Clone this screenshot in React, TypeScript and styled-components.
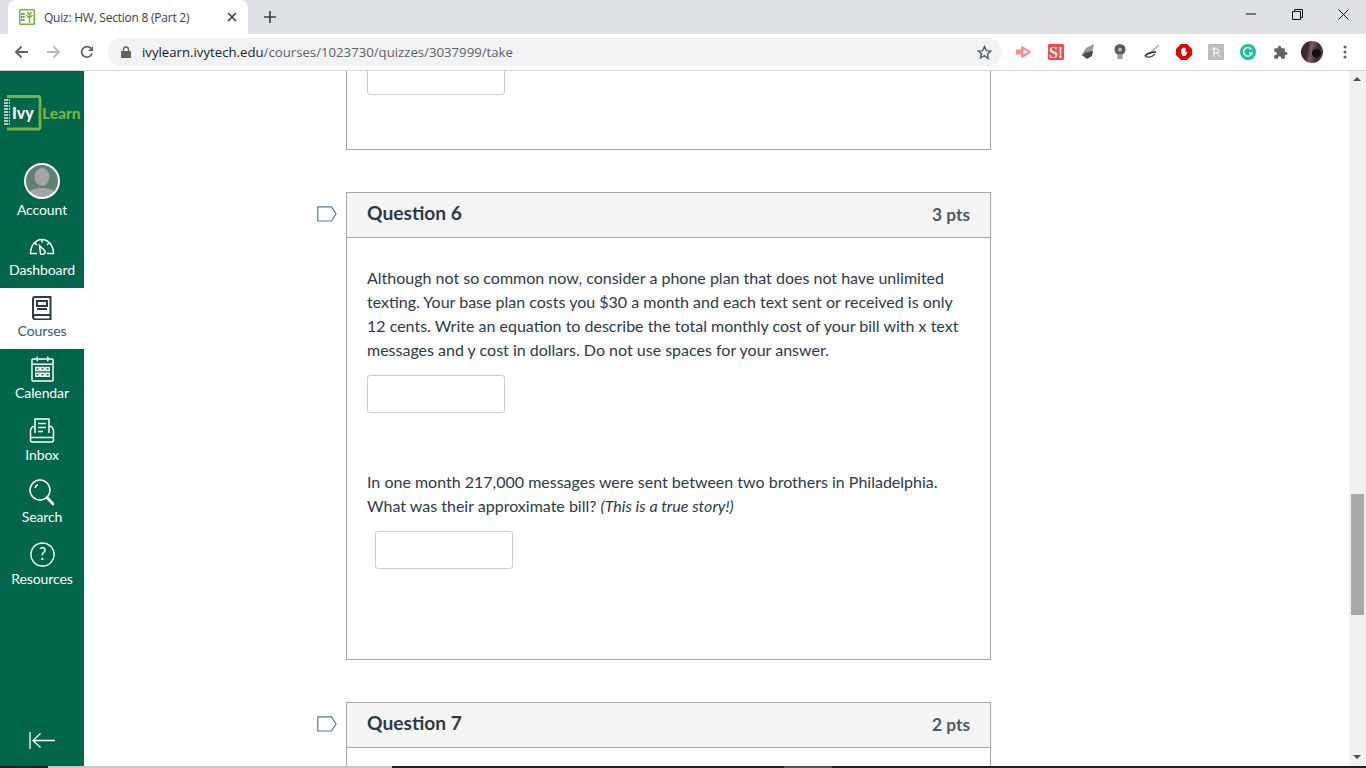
import React from "react";
import styled, { createGlobalStyle } from "styled-components";

const Global = createGlobalStyle`
  html, body { margin: 0; padding: 0; height: 768px; overflow: hidden; background: #fff; }
  #root { width: 1366px; height: 768px; }
  * { box-sizing: border-box; }
`;

const Page = styled.div`
  width: 1366px; height: 768px; display: flex; flex-direction: column; overflow: hidden;
  font-family: Lato, "Noto Sans", sans-serif; position: relative;
`;
const TabStrip = styled.div`
  height: 34px; background: #dee1e6; display: flex; align-items: flex-end; flex: none; padding-left: 8px;
`;
const Tab = styled.div`
  width: 240px; height: 34px; background: #fff; border-radius: 8px 8px 0 0; display: flex; align-items: center;
  padding: 0 0 0 11px; font: 12px "Open Sans", "Liberation Sans", sans-serif; color: #3c4043; position: relative;
`;
const TabTitle = styled.span` margin-left: 9px; flex: 1; white-space: nowrap; letter-spacing: -0.24px; `;
const TabClose = styled.span` width: 28px; display: flex; justify-content: center; margin-right: 2px; `;
const NewTab = styled.div` width: 44px; height: 34px; display: flex; align-items: center; justify-content: center; `;
const WinControls = styled.div` margin-left: auto; display: flex; height: 34px; align-items: center; `;
const WinBtn = styled.div` width: 46px; height: 30px; display: flex; align-items: center; justify-content: center; margin-top: -6px;`;

const ToolBar = styled.div`
  height: 37px; background: #fff; display: flex; align-items: center; flex: none; border-bottom: 1px solid #d3d5d8;
`;
const NavIcons = styled.div` display: flex; width: 108px; padding-left: 9px; gap: 9px; align-items: center; `;
const NavBtn = styled.div` width: 24px; height: 24px; display: flex; align-items: center; justify-content: center; `;
const Omnibox = styled.div`
  width: 894px; height: 28px; border-radius: 14px; background: #f1f3f4; display: flex; align-items: center;
  padding: 0 10px 0 13px; font: 13.2px "Open Sans", "Liberation Sans", sans-serif; color: #5f6368;
`;
const Host = styled.span` color: #202124; `;
const UrlText = styled.span` margin-left: 11px; flex: 1; white-space: nowrap; `;
const Extensions = styled.div` display: flex; align-items: center; margin-left: 6px; gap: 0; `;
const Ext = styled.div` width: 32px; height: 24px; display: flex; align-items: center; justify-content: center; `;
const Avatar = styled.div`
  width: 22px; height: 22px; border-radius: 50%; margin: 0 20px 0 5px; flex: none;
  background: radial-gradient(circle at 70% 55%, #111 0 22%, transparent 24%), linear-gradient(100deg, #3a2a2c 0 30%, #7a6266 45%, #3d2c30 70%, #554045);
`;

const Body = styled.div` flex: 1; display: flex; min-height: 0; `;
const Side = styled.nav`
  width: 84px; background: #00664a; flex: none; display: flex; flex-direction: column; align-items: stretch; position: relative;
`;
const LogoBox = styled.div` height: 81px; padding-top: 23px; padding-left: 2px; display: flex; `;
const NavItem = styled.div<{ $active?: boolean; $h: number }>`
  height: ${p => p.$h}px; flex: none; display: flex; flex-direction: column; align-items: center; justify-content: flex-end;
  background: ${p => (p.$active ? "#fff" : "transparent")};
  color: ${p => (p.$active ? "#2d5b7b" : "#fff")};
  font-size: 14px; line-height: 18px; padding-bottom: 9px; letter-spacing: -0.1px;
`;
const IconSlot = styled.div<{ $gap: number }>`
  display: flex; align-items: flex-end; justify-content: center; margin-bottom: ${p => p.$gap}px; line-height: 0;
`;
const Collapse = styled.div` position: absolute; left: 29px; bottom: 18px; line-height: 0; `;

const Main = styled.main` flex: 1; position: relative; min-width: 0; overflow: hidden; padding-left: 262px; `;
const Scrollbar = styled.div`
  width: 17px; background: #f1f1f1; flex: none; display: flex; flex-direction: column; align-items: center; position: relative;
`;
const Arrow = styled.div<{ $dir: "up" | "down" }>`
  position: absolute; left: 4px; ${p => (p.$dir === "up" ? "top: 6px;" : "bottom: 9px;")}
  width: 0; height: 0; border-left: 4px solid transparent; border-right: 4px solid transparent;
  ${p => (p.$dir === "up" ? "border-bottom: 4px solid #505050;" : "border-top: 4px solid #505050;")}
`;
const Thumb = styled.div` position: absolute; left: 2px; top: 423px; width: 13px; height: 121px; background: #a8a8a8; `;

const Card = styled.section<{ $h: number; $mt: number; $top?: boolean }>`
  display: flow-root;
  width: 645px; height: ${p => p.$h}px; margin-top: ${p => p.$mt}px; border: 1px solid #a6a6a6;
  ${p => p.$top && "border-top: none;"} position: relative; flex: none; padding: 0 20px; background: #fff;
`;
const Head = styled.header`
  height: 45px; margin: 0 -20px; padding: 0 20px; background: #f5f5f5; border-bottom: 1px solid #a6a6a6;
  display: flex; justify-content: space-between; align-items: center; color: #2d3b45;
`;
const QTitle = styled.h2` margin: -4px 0 0; font-size: 19.2px; font-weight: 700; color: #2d3b45; line-height: 24px; `;
const Pts = styled.span` font-size: 17.3px; font-weight: 700; color: #4c5a64; line-height: 20px; `;
const Flag = styled.div` position: absolute; left: -30px; top: 13px; line-height: 0; `;
const Para = styled.p<{ $mt: number }>`
  margin: ${p => p.$mt}px 0 0; font-size: 16px; line-height: 24px; color: #2d3b45; width: 600px;
`;
const Ans = styled.input<{ $ml?: number; $mt: number }>`
  display: block; width: 138px; height: 38px; border: 1px solid #c7cdd1; border-radius: 3px; background: #fff;
  margin-left: ${p => p.$ml ?? 0}px; margin-top: ${p => p.$mt}px; padding: 0;
`;
const Taskbar = styled.div`
  position: absolute; left: 0; right: 0; bottom: 0; height: 2px; background: #202020; display: flex;
`;
const TaskGap = styled.div` margin-left: 48px; width: 344px; background: #c8c8c8; `;
const TaskActive = styled.div` margin-left: 392px; width: 48px; background: #555; `;

const Logo = () => (
  <svg width="80" height="38" viewBox="0 0 80 38">
    <path d="M5 2.500H36a2 2 0 0 1 2 2V33a2 2 0 0 1-2 2H5" fill="none" stroke="#7ab338" strokeWidth="2.800" />
    <g stroke="#e8efe6" strokeWidth="1.400" strokeDasharray="4 0.800">
      {[6, 9, 12, 15, 18, 21, 24, 27, 30].map(y => <path key={y} d={`M2 ${y}h6`} />)}
    </g>
    <text x="10" y="25" fontFamily="Lato, sans-serif" fontWeight="900" fontSize="16" fill="#fff">Ivy</text>
    <text x="40" y="25" fontFamily="Lato, sans-serif" fontWeight="900" fontSize="15.500" fill="#7ab338">Learn</text>
  </svg>
);
const AccountIcon = () => (
  <svg width="36" height="36" viewBox="0 0 36 36">
    <defs><clipPath id="c"><circle cx="18" cy="18" r="16.500" /></clipPath></defs>
    <circle cx="18" cy="18" r="16.500" fill="#5f8173" />
    <g clipPath="url(#c)" fill="#a5a5a5">
      <ellipse cx="18" cy="14" rx="7.500" ry="9" />
      <path d="M3 36c0-9 7-11 15-11s15 2 15 11z" />
    </g>
    <circle cx="18" cy="18" r="17" fill="none" stroke="#fff" strokeWidth="2" />
  </svg>
);
const stroke = { fill: "none", stroke: "#fff", strokeWidth: 1.5 } as const;
const DashIcon = () => (
  <svg width="26" height="17" viewBox="0 0 26 17" {...stroke}>
    <path d="M8 15.500H1.500A11.500 14 0 0 1 24.500 15.500H18" />
    <path d="M13 1.500v3M6 5l2 2M20 5l-2 2" />
    <path d="M10.500 7.500L15.500 12.500a2.500 2.500 0 0 1-4 3z" />
  </svg>
);
const BookIcon = () => (
  <svg width="20" height="24" viewBox="0 0 20 24" fill="none" stroke="#2d3b45" strokeWidth="2">
    <path d="M3 1h15.500v18H3.500A2.500 2.500 0 0 0 1 21.500V3a2 2 0 0 1 2-2z" />
    <path d="M1 21a2.500 2.500 0 0 0 2.500 2.500h15V19" />
    <rect x="5" y="5" width="10" height="5" />
    <path d="M5 13h10" />
  </svg>
);
const CalIcon = () => (
  <svg width="23" height="26" viewBox="0 0 24 27" {...stroke}>
    <rect x="1" y="3" width="22" height="23" rx="1" />
    <path d="M1 8.500h22M6.500 .5v5M17.500 .5v5" />
    <path d="M5 12h3.500v3H5zM10.200 12h3.500v3h-3.500zM15.500 12H19v3h-3.500zM5 18h3.500v3H5zM10.200 18h3.500v3h-3.500zM15.500 18H19v3h-3.500z" />
  </svg>
);
const InboxIcon = () => (
  <svg width="26" height="25" viewBox="0 0 26 25" {...stroke}>
    <path d="M6 15V1h14v14" />
    <path d="M9 5.500h8M9 9.500h8M9 13.500h5" />
    <path d="M6 8.500H3.500L1.500 12v10a2 2 0 0 0 2 2h19a2 2 0 0 0 2-2V12l-2-3.500H20" />
    <path d="M1.500 19.500H24.500" />
  </svg>
);
const SearchIcon = () => (
  <svg width="26" height="27" viewBox="0 0 26 27" {...stroke}>
    <circle cx="11" cy="11" r="10" />
    <path d="M6 9a6 6 0 0 1 3-3.500" />
    <path d="M18 18.500l6 6.500" strokeWidth="2.600" strokeLinecap="round" />
  </svg>
);
const HelpIcon = () => (
  <svg width="25" height="25" viewBox="0 0 26 26" {...stroke}>
    <circle cx="13" cy="13" r="12" />
    <text x="13" y="19" textAnchor="middle" fontFamily="Lato, sans-serif" fontSize="17" fill="#fff" stroke="none">?</text>
  </svg>
);
const CollapseIcon = () => (
  <svg width="26" height="18" viewBox="0 0 26 18" fill="none" stroke="#fff" strokeWidth="1.300">
    <path d="M1 0v17M26 8.500H4M11.500 1.500L4 8.500l7.500 7" />
  </svg>
);
const FlagIcon = () => (
  <svg width="20" height="16" viewBox="0 0 20 16" fill="none" stroke="#4f7a98" strokeWidth="1.200">
    <path d="M.8 .8H14.500L19 8l-4.500 7H.8z" />
  </svg>
);

const Favicon = () => (
  <svg width="16" height="16" viewBox="0 0 16 16">
    <rect width="16" height="16" rx="1.500" fill="#7ab338" />
    <rect x="1.500" y="1.500" width="13" height="13" fill="#fff" />
    <path d="M10.500 14V5M10.500 9l3-3M10.500 9l-3-3M10.500 6l2-3M10.500 6l-2-3" stroke="#7ab338" strokeWidth="1.400" fill="none" />
    <path d="M2 5h4M2 8h4M2 11h4" stroke="#00664a" strokeWidth="1.300" strokeDasharray="1.200 .5" />
  </svg>
);

export default function App() {
  return (
    <Page>
      <Global />
      <TabStrip>
        <Tab>
          <Favicon />
          <TabTitle>Quiz: HW, Section 8 (Part 2)</TabTitle>
          <TabClose>
            <svg width="10" height="10" viewBox="0 0 10 10" stroke="#3c4043" strokeWidth="1.600"><path d="M1 1l8 8M9 1l-8 8" /></svg>
          </TabClose>
        </Tab>
        <NewTab>
          <svg width="12" height="12" viewBox="0 0 12 12" stroke="#3c4043" strokeWidth="1.700"><path d="M6 0v12M0 6h12" /></svg>
        </NewTab>
        <WinControls>
          <WinBtn><svg width="10" height="2" viewBox="0 0 10 2" stroke="#111"><path d="M0 1h10" /></svg></WinBtn>
          <WinBtn>
            <svg width="11" height="11" viewBox="0 0 11 11" fill="none" stroke="#111"><path d="M.5 2.500h8v8h-8zM2.500 2.500v-2h8v8h-2" /></svg>
          </WinBtn>
          <WinBtn><svg width="11" height="11" viewBox="0 0 11 11" stroke="#111"><path d="M.5 .5l10 10M10.500 .5l-10 10" /></svg></WinBtn>
        </WinControls>
      </TabStrip>
      <ToolBar>
        <NavIcons>
          <NavBtn>
            <svg width="14" height="14" viewBox="0 0 14 14" fill="none" stroke="#5f6368" strokeWidth="1.800"><path d="M14 7H2M7.500 1.500L2 7l5.500 5.500" /></svg>
          </NavBtn>
          <NavBtn>
            <svg width="14" height="14" viewBox="0 0 14 14" fill="none" stroke="#b8babd" strokeWidth="1.800"><path d="M0 7h12M6.500 1.500L12 7l-5.500 5.500" /></svg>
          </NavBtn>
          <NavBtn>
            <svg width="14" height="14" viewBox="0 0 14 14" fill="none" stroke="#5f6368" strokeWidth="1.800"><path d="M12 8.500A5.300 5.300 0 1 1 10.800 3.200" /><path d="M13 1v5H8z" fill="#5f6368" stroke="none" /></svg>
          </NavBtn>
        </NavIcons>
        <Omnibox>
          <svg width="10" height="12" viewBox="0 0 10 12"><rect y="5" width="10" height="7" rx="1" fill="#5f6368" /><path d="M2.500 5.500V3.500a2.500 2.500 0 0 1 5 0v2" stroke="#5f6368" strokeWidth="1.300" fill="none" /></svg>
          <UrlText><Host>ivylearn.ivytech.edu</Host>/courses/1023730/quizzes/3037999/take</UrlText>
          <svg width="15" height="15" viewBox="0 0 24 24" fill="none" stroke="#5f6368" strokeWidth="2.400"><path d="M12 2.500l3 6.500 7 .8-5.200 4.800 1.400 7L12 17.100 5.800 20.600l1.400-7L2 9.800 9 9z" /></svg>
        </Omnibox>
        <Extensions>
          <Ext><svg width="16" height="12" viewBox="0 0 16 12"><path d="M0 3.500h5V.5h2l8.500 5.500L7 11.500H5v-3H0z" fill="#ff8a92" /><path d="M7.500 3.500L12 6 7.500 8.500z" fill="#fff" /></svg></Ext>
          <Ext><svg width="16" height="16" viewBox="0 0 16 16"><rect width="16" height="16" rx="1.500" fill="#f0484e" /><text x="8" y="13.500" textAnchor="middle" fontFamily="Liberation Serif, serif" fontWeight="700" fontSize="16" fill="#fff">S!</text></svg></Ext>
          <Ext><svg width="16" height="16" viewBox="0 0 16 16"><path d="M14 0L6 4 1 12l5-2 6-2z" fill="#999" /><path d="M2 11l5-3 6-1-1 5-5 3z" fill="#4a4a4a" /></svg></Ext>
          <Ext><svg width="12" height="16" viewBox="0 0 12 16"><circle cx="6" cy="5.500" r="5.500" fill="#5a5a5a" /><circle cx="6" cy="5.500" r="2" fill="#bbb" /><rect x="3.500" y="10" width="5" height="5" fill="#999" /></svg></Ext>
          <Ext><svg width="16" height="14" viewBox="0 0 16 14"><path d="M15 0L6 8" stroke="#aaa" strokeWidth="1.500" /><path d="M1 11c3-3 8-4 11-4" stroke="#222" strokeWidth="1.500" fill="none" /><path d="M1 11c3 2 7 1 10-2" stroke="#555" strokeWidth="1.500" fill="none" /></svg></Ext>
          <Ext><svg width="16" height="16" viewBox="0 0 16 16"><path d="M5 0h6l5 5v6l-5 5H5l-5-5V5z" fill="#e60000" /><path d="M5 8V5h1v2-3h1.200v3-3.500h1.200V7V4h1.200v5l1.200-1.500.7.500-2 4H6.500z" fill="#fff" /></svg></Ext>
          <Ext><svg width="16" height="16" viewBox="0 0 16 16"><rect width="16" height="16" rx="1" fill="#bdbdbd" /><path d="M4 5h5a2 2 0 0 1 0 4H6M6 3v9c0 1 1 1 1 1M9 9l3 4" stroke="#fff" fill="none" /></svg></Ext>
          <Ext><svg width="16" height="16" viewBox="0 0 16 16"><circle cx="8" cy="8" r="8" fill="#15c39a" /><path d="M11.500 5.500A4.300 4.300 0 1 0 12 9H9" stroke="#fff" strokeWidth="1.700" fill="none" /></svg></Ext>
          <Ext><svg width="15" height="15" viewBox="0 0 24 24" fill="#5f6368"><path d="M20.500 11H19V7a2 2 0 0 0-2-2h-4V3.500a2.500 2.500 0 0 0-5 0V5H4a2 2 0 0 0-2 2v3.800h1.500a2.700 2.700 0 0 1 0 5.400H2V20a2 2 0 0 0 2 2h3.800v-1.500a2.700 2.700 0 0 1 5.400 0V22H17a2 2 0 0 0 2-2v-4h1.500a2.500 2.500 0 0 0 0-5z" /></svg></Ext>
          <Avatar />
          <svg width="4" height="14" viewBox="0 0 4 14" fill="#5f6368"><circle cx="2" cy="2" r="1.500" /><circle cx="2" cy="7" r="1.500" /><circle cx="2" cy="12" r="1.500" /></svg>
        </Extensions>
      </ToolBar>
      <Body>
        <Side>
          <LogoBox><Logo /></LogoBox>
          <NavItem $h={76}><IconSlot $gap={2}><AccountIcon /></IconSlot>Account</NavItem>
          <NavItem $h={60}><IconSlot $gap={6}><DashIcon /></IconSlot>Dashboard</NavItem>
          <NavItem $active $h={61}><IconSlot $gap={2}><BookIcon /></IconSlot>Courses</NavItem>
          <NavItem $h={62}><IconSlot $gap={2}><CalIcon /></IconSlot>Calendar</NavItem>
          <NavItem $h={62}><IconSlot $gap={3}><InboxIcon /></IconSlot>Inbox</NavItem>
          <NavItem $h={62}><IconSlot $gap={2}><SearchIcon /></IconSlot>Search</NavItem>
          <NavItem $h={62}><IconSlot $gap={3}><HelpIcon /></IconSlot>Resources</NavItem>
          <Collapse><CollapseIcon /></Collapse>
        </Side>
        <Main>
          <Card $top $h={79} $mt={0}>
            <Ans $mt={-14} />
          </Card>
          <Card $h={468} $mt={42}>
            <Flag><FlagIcon /></Flag>
            <Head><QTitle>Question 6</QTitle><Pts>3 pts</Pts></Head>
            <Para $mt={28}>
              Although not so common now, consider a phone plan that does not have unlimited texting. Your base plan costs you $30 a month and each text sent or received is only 12 cents. Write an equation to describe the total monthly cost of your bill with x text messages and y cost in dollars. Do not use spaces for your answer.
            </Para>
            <Ans $mt={13} />
            <Para $mt={57}>
              In one month 217,000 messages were sent between two brothers in Philadelphia. What was their approximate bill? <em>(This is a true story!)</em>
            </Para>
            <Ans $mt={13} $ml={8} />
          </Card>
          <Card $h={100} $mt={42}>
            <Flag><FlagIcon /></Flag>
            <Head><QTitle>Question 7</QTitle><Pts>2 pts</Pts></Head>
          </Card>
        </Main>
        <Scrollbar>
          <Arrow $dir="up" />
          <Thumb />
          <Arrow $dir="down" />
        </Scrollbar>
      </Body>
      <Taskbar><TaskGap /><TaskActive /></Taskbar>
    </Page>
  );
}
